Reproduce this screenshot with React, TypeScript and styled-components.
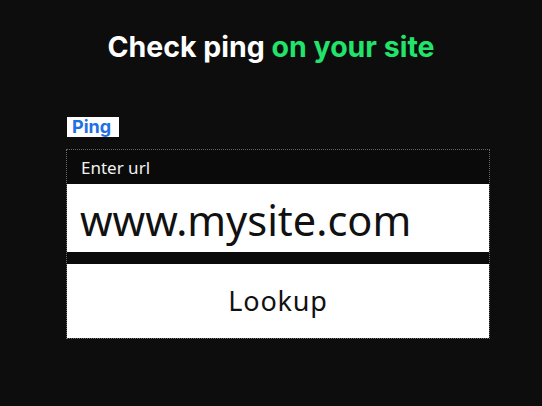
import React from "react";
import styled, { createGlobalStyle } from "styled-components";

const GlobalStyle = createGlobalStyle`
  html, body {
    margin: 0;
    padding: 0;
    background: #0d0d0d;
  }
  body {
    font-family: "Noto Sans", "Liberation Sans", sans-serif;
  }
`;

const Page = styled.main`
  width: 542px;
  height: 406px;
  background: #0d0d0d;
  display: flex;
  flex-direction: column;
  overflow: hidden;
`;

const Title = styled.h1`
  margin: 28px 0 0;
  text-align: center;
  font-family: "Inter", "Noto Sans", sans-serif;
  font-weight: 700;
  font-size: 28.5px;
  letter-spacing: 0;
  line-height: 38px;
  color: #ffffff;
  span {
    color: #22e36b;
  }
`;

const Form = styled.form`
  margin: 51px 0 0 66px;
  width: 424px;
  display: flex;
  flex-direction: column;
  align-items: flex-start;
`;

const Tag = styled.label`
  margin-left: 1px;
  background: #ffffff;
  color: #1f6fe5;
  font-family: "Inter", "Noto Sans", sans-serif;
  font-weight: 700;
  font-size: 18px;
  line-height: 20px;
  padding: 0 5px;
  width: 42px;
`;

const Panel = styled.div`
  margin-top: 12px;
  width: 100%;
  box-sizing: border-box;
  border: 1px dotted #6a6a6a;
  background: #0a0a0a;
  display: flex;
  flex-direction: column;
  gap: 12px;
`;

const Field = styled.div`
  display: flex;
  flex-direction: column;
`;

const FieldLabel = styled.div`
  height: 34px;
  display: flex;
  align-items: center;
  padding-left: 14px;
  color: #f2f2f2;
  font-size: 17px;
`;

const UrlInput = styled.input`
  height: 68px;
  box-sizing: border-box;
  border: none;
  outline: none;
  background: #ffffff;
  color: #111111;
  padding: 4px 0 0 13px;
  font-family: "Noto Sans", "Liberation Sans", sans-serif;
  font-size: 41.5px;
  letter-spacing: 0;
  width: 100%;
`;

const LookupButton = styled.button`
  height: 74px;
  border: none;
  background: #ffffff;
  color: #111111;
  font-family: "Noto Sans", "Liberation Sans", sans-serif;
  font-size: 27px;
  letter-spacing: 0.8px;
  cursor: pointer;
  padding: 0 0 2px;
`;

const App: React.FC = () => {
  return (
    <Page>
      <GlobalStyle />
      <Title>
        Check ping <span>on your site</span>
      </Title>
      <Form onSubmit={(e) => e.preventDefault()}>
        <Tag htmlFor="url">Ping</Tag>
        <Panel>
          <Field>
            <FieldLabel>Enter url</FieldLabel>
            <UrlInput id="url" defaultValue="www.mysite.com" />
          </Field>
          <LookupButton type="submit">Lookup</LookupButton>
        </Panel>
      </Form>
    </Page>
  );
};

export default App;
